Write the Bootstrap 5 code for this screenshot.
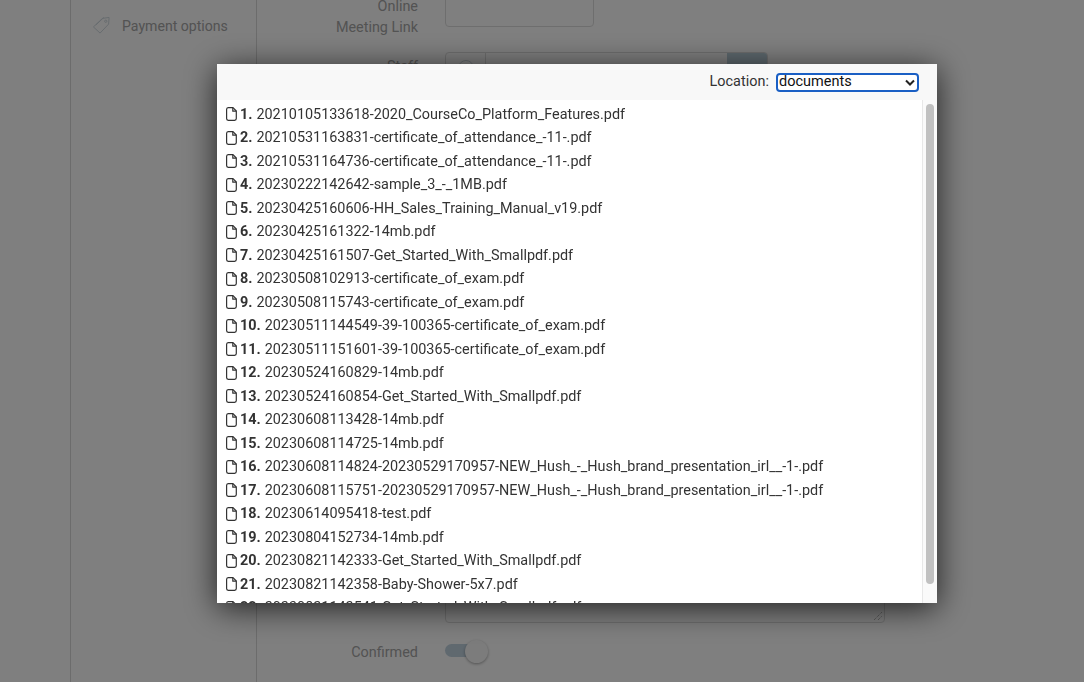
<!doctype html>
<html lang="en"><head><meta charset="utf-8"><title>Files</title>
<link href="https://cdn.jsdelivr.net/npm/bootstrap@5.3.0/dist/css/bootstrap.min.css" rel="stylesheet">
<style>
html,body{height:100%;margin:0;overflow:hidden}
body{font-family:Roboto,"Liberation Sans",sans-serif;background:#fff}
.bg-page{height:682px;overflow:hidden;padding-left:70px;display:flex;color:#a6a6a6;font-size:14.4px}
.side-col{width:187px;border-left:1px solid #d9d9d9;border-right:1px solid #d9d9d9;padding:16px 0 0 21px;flex:none;line-height:21px;font-size:14.1px}
.side-col svg{width:19px;height:19px;margin-right:11px;color:#ccd6dc;flex:none}
.form-col{flex:1;margin-top:-14px}
.frow{display:flex;gap:27px}
.flabel{width:161px;text-align:right;line-height:21px;flex:none}
.lab-link{padding-top:10px;margin-bottom:-10px}
.lab-staff{padding-top:4px}
.linkbox{width:149px;height:41px;border:1px solid #ddd;border-radius:4px}
.staffbox{width:323px;height:41px;border:1px solid #ddd;border-radius:4px;display:flex;overflow:hidden}
.staffbox i{width:40px;border-right:1px solid #ddd;display:flex;justify-content:center;padding-top:7px}
.staffbox i::before{content:"";width:16px;height:16px;border:1px solid #ccd6dc;border-radius:50%}
.staffbox b{margin-left:auto;width:40px;background:#bdd2dd}
.row-staff{margin-top:24px}
.row-notes{margin-top:490px}
.row-conf{margin-top:19px}
.notesbox{width:440px;height:40px;border:1px solid #ddd;border-radius:4px;display:flex;justify-content:flex-end;align-items:flex-end}
.notesbox svg{width:10px;height:10px;margin:0 1px 1px 0}
.tog{width:42px;height:13px;border-radius:7px;background:#c0d2df;position:relative;margin-top:2px}
.tog::after{content:"";position:absolute;right:-1px;top:-4px;width:23px;height:23px;border-radius:50%;background:#f9f9f9;box-shadow:0 1px 3px rgba(0,0,0,.35)}
.dim{position:fixed;inset:0;background:rgba(0,0,0,.5)}
.picker{position:fixed;left:217px;top:64px;width:720px;height:539px;background:#fff;display:flex;flex-direction:column;box-shadow:0 5px 30px rgba(0,0,0,.75)}
.picker-head{height:36px;background:#f8f8f8;padding-right:18px;color:#333;font-size:14.4px;flex:none}
.picker-head label{margin-right:-1px;letter-spacing:.05px}
.picker-head select{width:143px;height:19px;padding:0 0 1px 1px;border:2px solid #1a5fc4;border-radius:4px;font-size:14.5px;line-height:14px;color:#111;background-image:url("data:image/svg+xml,%3Csvg xmlns='http://www.w3.org/2000/svg' viewBox='0 0 10 7'%3E%3Cpath d='M1 1.500l4 4 4-4' fill='none' stroke='%23222' stroke-width='2'/%3E%3C/svg%3E");background-position:right 2px center;background-size:10px 7px;box-shadow:none}
.picker-main{flex:1;display:flex;min-height:0}
.picker-body{flex:1;overflow:hidden;padding:2.6px 0 0 9px;color:#333;font-size:14.4px}
.picker-body li{height:23.5px;line-height:23.5px;white-space:nowrap;display:flex;align-items:center}
.picker-body svg{width:11px;height:14px;margin:0 3px 0 0;flex:none}
.picker-body b{font-weight:700;margin-right:4px}
.sbar{width:15px;flex:none;background:#fafafa;border-left:1px solid #e8e8e8;padding:4px 3px 0}
.sbar-thumb{height:480px;border-radius:4px;background:#c1c1c1}
</style></head><body>
<div class="bg-page">
<div class="side-col d-flex align-items-start"><svg viewBox="0 0 20 20" fill="none" stroke="currentColor"><path d="M1.500 11.500 11 2.500l7-1-.5 7-9 9.500z"/><path d="M4 9.500 12.500 1.500"/><circle cx="14.500" cy="5.500" r="1.200"/></svg><span>Payment options</span></div>
<div class="form-col">
<div class="frow"><div class="flabel lab-link">Online<br>Meeting Link</div><div class="linkbox"></div></div>
<div class="frow row-staff"><div class="flabel lab-staff">Staff</div><div class="staffbox"><i></i><b></b></div></div>
<div class="frow row-notes"><div class="flabel"></div><div class="notesbox"><svg viewBox="0 0 10 10" stroke="#999" stroke-dasharray="1 1"><path d="M1 9 9 1M5 9 9 5"/></svg></div></div>
<div class="frow row-conf"><div class="flabel">Confirmed</div><div class="tog"></div></div>
</div></div>
<div class="dim"></div>
<div class="picker">
<div class="picker-head d-flex align-items-center justify-content-end gap-2"><label for="loc">Location:</label><select id="loc" class="form-select"><option>documents</option></select></div>
<div class="picker-main">
<ul class="picker-body list-unstyled mb-0" id="files">
<li><svg viewBox="0 0 11 14"><use href="#ic"/></svg><b>1.</b>20210105133618-2020_CourseCo_Platform_Features.pdf</li>
<li><svg viewBox="0 0 11 14"><use href="#ic"/></svg><b>2.</b>20210531163831-certificate_of_attendance_-11-.pdf</li>
<li><svg viewBox="0 0 11 14"><use href="#ic"/></svg><b>3.</b>20210531164736-certificate_of_attendance_-11-.pdf</li>
<li><svg viewBox="0 0 11 14"><use href="#ic"/></svg><b>4.</b>20230222142642-sample_3_-_1MB.pdf</li>
<li><svg viewBox="0 0 11 14"><use href="#ic"/></svg><b>5.</b>20230425160606-HH_Sales_Training_Manual_v19.pdf</li>
<li><svg viewBox="0 0 11 14"><use href="#ic"/></svg><b>6.</b>20230425161322-14mb.pdf</li>
<li><svg viewBox="0 0 11 14"><use href="#ic"/></svg><b>7.</b>20230425161507-Get_Started_With_Smallpdf.pdf</li>
<li><svg viewBox="0 0 11 14"><use href="#ic"/></svg><b>8.</b>20230508102913-certificate_of_exam.pdf</li>
<li><svg viewBox="0 0 11 14"><use href="#ic"/></svg><b>9.</b>20230508115743-certificate_of_exam.pdf</li>
<li><svg viewBox="0 0 11 14"><use href="#ic"/></svg><b>10.</b>20230511144549-39-100365-certificate_of_exam.pdf</li>
<li><svg viewBox="0 0 11 14"><use href="#ic"/></svg><b>11.</b>20230511151601-39-100365-certificate_of_exam.pdf</li>
<li><svg viewBox="0 0 11 14"><use href="#ic"/></svg><b>12.</b>20230524160829-14mb.pdf</li>
<li><svg viewBox="0 0 11 14"><use href="#ic"/></svg><b>13.</b>20230524160854-Get_Started_With_Smallpdf.pdf</li>
<li><svg viewBox="0 0 11 14"><use href="#ic"/></svg><b>14.</b>20230608113428-14mb.pdf</li>
<li><svg viewBox="0 0 11 14"><use href="#ic"/></svg><b>15.</b>20230608114725-14mb.pdf</li>
<li><svg viewBox="0 0 11 14"><use href="#ic"/></svg><b>16.</b>20230608114824-20230529170957-NEW_Hush_-_Hush_brand_presentation_irl__-1-.pdf</li>
<li><svg viewBox="0 0 11 14"><use href="#ic"/></svg><b>17.</b>20230608115751-20230529170957-NEW_Hush_-_Hush_brand_presentation_irl__-1-.pdf</li>
<li><svg viewBox="0 0 11 14"><use href="#ic"/></svg><b>18.</b>20230614095418-test.pdf</li>
<li><svg viewBox="0 0 11 14"><use href="#ic"/></svg><b>19.</b>20230804152734-14mb.pdf</li>
<li><svg viewBox="0 0 11 14"><use href="#ic"/></svg><b>20.</b>20230821142333-Get_Started_With_Smallpdf.pdf</li>
<li><svg viewBox="0 0 11 14"><use href="#ic"/></svg><b>21.</b>20230821142358-Baby-Shower-5x7.pdf</li>
<li><svg viewBox="0 0 11 14"><use href="#ic"/></svg><b>22.</b>20230821142541-Get_Started_With_Smallpdf.pdf</li>
</ul>
<div class="sbar"><div class="sbar-thumb"></div></div>
</div>
</div>
<svg width="0" height="0" class="position-absolute"><defs><g id="ic" fill="none" stroke="#333" stroke-width="1.200" stroke-linejoin="round"><path d="M2.200.7h4.800l3.300 3.300v7.600a1.700 1.700 0 0 1-1.700 1.700H2.200a1.700 1.700 0 0 1-1.600-1.700V2.400A1.700 1.700 0 0 1 2.200.7z"/><path d="M6.800.8v3.400h3.400"/></g></defs></svg>
<script src="https://cdn.jsdelivr.net/npm/bootstrap@5.3.0/dist/js/bootstrap.bundle.min.js"></script>
</body></html>
